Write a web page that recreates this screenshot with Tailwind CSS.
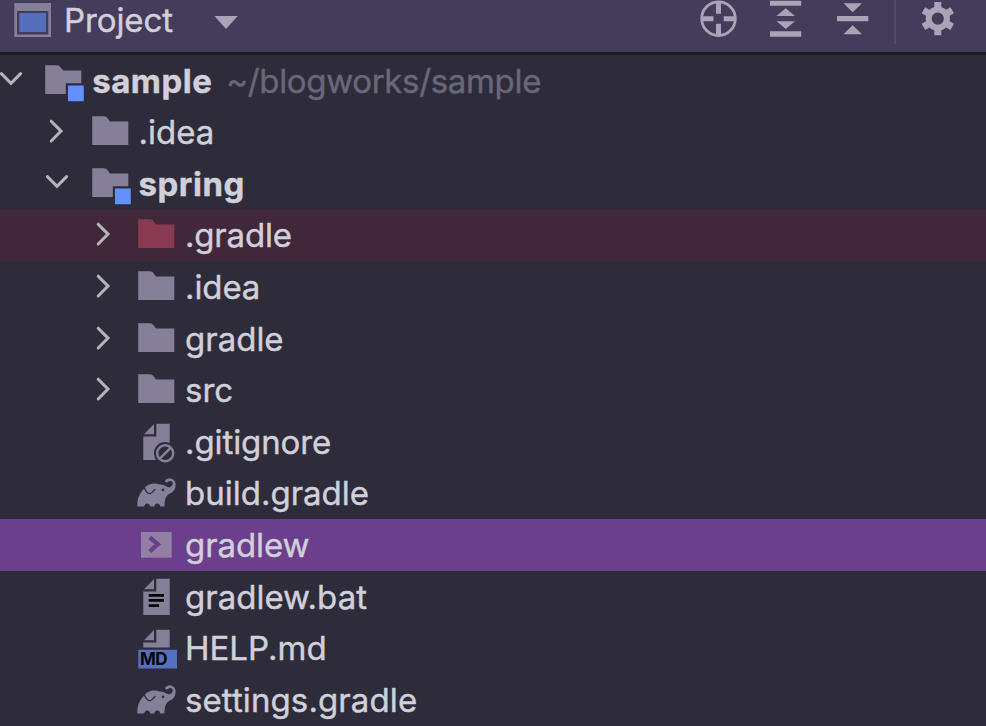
<!DOCTYPE html>
<html lang="en">
<head>
  <meta charset="UTF-8">
  <meta name="viewport" content="width=device-width, initial-scale=1.0">
  <title>Project</title>
  <script src="https://cdn.jsdelivr.net/npm/@tailwindcss/browser@4"></script>
</head>
<body class="bg-[#2e2c3a] text-[#d1d0da] font-['Inter',sans-serif] text-[33px] [-webkit-text-stroke:0.4px] overflow-hidden h-screen">

  <!-- Shared icons -->
  <svg class="hidden">
    <symbol id="right" viewBox="0 0 24 51.6">
      <path d="M5.2 15.2L15 25.1L5.2 35" fill="none" stroke="#b5b4b8" stroke-width="3" stroke-linecap="round"/>
    </symbol>
    <symbol id="down" viewBox="0 0 24 51.6">
      <path d="M1.4 18.6L11 28.4L20.6 18.6" fill="none" stroke="#b5b4b8" stroke-width="3" stroke-linecap="round"/>
    </symbol>
    <symbol id="folder" viewBox="0 0 48 51.6">
      <path d="M2.2 10.3H13.4C16.5 10.3 17.5 12.2 20 15.4H38.3V39H2.2Z" fill="currentColor"/>
    </symbol>
    <symbol id="module" viewBox="0 0 48 51.6">
      <path d="M2.2 10.3H13.4C16.5 10.3 17.5 12.2 20 15.4H38.3V28.3H22.8V39H2.2Z" fill="currentColor"/>
      <path d="M25 30.6H40.8V46.2H25Z" fill="#6490fb"/>
    </symbol>
    <symbol id="elephant" viewBox="0 0 48 51.6">
      <g transform="translate(-16 -52.4) scale(.33333)">
        <path d="M52 276C51 256 56 241 67 228L75 219C78 215 80 213 84 212C94 206 108 205 119 210C129 210 139 216 145 218C152 219 159 213 158 206C157 199 150 197 146 201C143 205 136 204 135 199C137 194 144 191 149 191C160 192 167 200 167 210C167 225 158 235 147 238C140 242 136 249 134 262L133 276H121C119 264 105 264 103 276H91C88 264 76 264 72 276Z" fill="currentColor"/>
        <path d="M73 220C78 231 84 239 91 237C97 235 100 228 106 224" fill="none" stroke="#2e2c3a" stroke-width="4"/>
        <circle cx="129" cy="226" r="4" fill="#2e2c3a"/>
      </g>
    </symbol>
  </svg>

  <!-- Tool window header -->
  <header class="flex h-[52px] bg-[#453b5b]">
    <div class="flex w-[64px] shrink-0">
      <svg class="w-[64px] h-[52px]" viewBox="0 0 64 52">
        <path d="M14.3 3H51V37H14.3ZM17 11V34.5H48.3V11Z" fill="#857f98" fill-rule="evenodd"/>
        <path d="M19.3 13H46V32H19.3Z" fill="#566fbd"/>
      </svg>
    </div>
    <h1 class="w-[150px] h-[40px] leading-[40px] tracking-[-0.1px]">Project</h1>
    <svg class="w-[24px] h-[52px]" viewBox="0 0 24 52"><path d="M.5 16H23.8L12 29Z" fill="#aaa5b6"/></svg>
    <div class="flex ml-auto text-[#aaa5b6]">
      <svg class="w-[306px] h-[52px]" viewBox="0 0 306 52" fill="currentColor">
        <!-- locate -->
        <circle cx="38.5" cy="18.7" r="16.8" fill="none" stroke="currentColor" stroke-width="2.8"/>
        <path d="M36 2H41V13.7H36ZM36 23.8H41V35.5H36ZM22 16.2H33.5V21.2H22ZM43.7 16.2H55V21.2H43.7Z"/>
        <!-- expand all -->
        <path d="M90 .7H121.2V5.8H90ZM90 31.3H121.2V36.7H90ZM96.5 16L105.7 8.3L115 16ZM96.5 21.2H115L105.7 29Z"/>
        <!-- collapse all -->
        <path d="M157 16H188.3V21.3H157ZM163.5 3.2H182L172.7 12.2ZM163.5 34.2L172.7 25.2L182 34.2Z"/>
        <path d="M214.2 0H216V44H214.2Z" fill="#544d66"/>
        <!-- settings -->
        <g fill="none" stroke="currentColor">
          <circle cx="257.8" cy="18.6" r="9.1" stroke-width="6"/>
          <path stroke-width="7" d="M257.8 2V9M257.8 28.2V35.2M243.4 10.3L249.5 13.8M266.1 23.4L272.2 26.9M243.4 26.9L249.5 23.4M266.1 13.8L272.2 10.3"/>
        </g>
      </svg>
    </div>
  </header>
  <div class="h-[2.6px] bg-[#1d1b26]"></div>

  <!-- Project tree -->
  <ul class="text-[#857f98] leading-[51.6px] whitespace-nowrap">
    <li class="flex h-[51.6px]">
      <svg class="w-[24px] h-[51.6px] mr-[19.2px]"><use href="#down"/></svg>
      <svg class="w-[48px] h-[51.6px] mr-px"><use href="#module"/></svg>
      <span class="text-[#d1d0da] font-bold tracking-[0.5px] w-[134px] pt-px">sample</span>
      <span class="text-[#696779] tracking-[-0.33px] pt-px">~/blogworks/sample</span>
    </li>
    <li class="flex h-[51.6px] pl-[46.4px]">
      <svg class="w-[24px] h-[51.6px] mr-[19.2px]"><use href="#right"/></svg>
      <svg class="w-[48px] h-[51.6px] mr-px"><use href="#folder"/></svg>
      <span class="text-[#d1d0da] pt-px">.idea</span>
    </li>
    <li class="flex h-[51.6px] pl-[46.4px]">
      <svg class="w-[24px] h-[51.6px] mr-[19.2px]"><use href="#down"/></svg>
      <svg class="w-[48px] h-[51.6px] mr-px"><use href="#module"/></svg>
      <span class="text-[#d1d0da] font-bold tracking-[0.5px] pt-px">spring</span>
    </li>
    <li class="flex h-[51.6px] pl-[92.8px] bg-[#40273a]">
      <svg class="w-[24px] h-[51.6px] mr-[19.2px]"><use href="#right"/></svg>
      <svg class="w-[48px] h-[51.6px] mr-px text-[#8a3a50]"><use href="#folder"/></svg>
      <span class="text-[#d1d0da] tracking-[-0.2px] pt-px">.gradle</span>
    </li>
    <li class="flex h-[51.6px] pl-[92.8px]">
      <svg class="w-[24px] h-[51.6px] mr-[19.2px]"><use href="#right"/></svg>
      <svg class="w-[48px] h-[51.6px] mr-px"><use href="#folder"/></svg>
      <span class="text-[#d1d0da] tracking-[-0.1px] pt-px">.idea</span>
    </li>
    <li class="flex h-[51.6px] pl-[92.8px]">
      <svg class="w-[24px] h-[51.6px] mr-[19.2px]"><use href="#right"/></svg>
      <svg class="w-[48px] h-[51.6px] mr-px"><use href="#folder"/></svg>
      <span class="text-[#d1d0da] pt-px">gradle</span>
    </li>
    <li class="flex h-[51.6px] pl-[92.8px]">
      <svg class="w-[24px] h-[51.6px] mr-[19.2px]"><use href="#right"/></svg>
      <svg class="w-[48px] h-[51.6px] mr-px"><use href="#folder"/></svg>
      <span class="text-[#d1d0da] pt-px">src</span>
    </li>
    <li class="flex h-[51.6px] pl-[136px]">
      <svg class="w-[48px] h-[51.6px] mr-px" viewBox="0 0 48 51.6" fill="currentColor">
        <path d="M18 8V18.2H8ZM20.3 7.7H33.7V44H7.3V20.5H20.3Z"/>
        <circle cx="29.2" cy="37.2" r="11.2" fill="#2e2c3a"/>
        <g fill="none" stroke="currentColor" stroke-width="2.5">
          <circle cx="29.2" cy="37.2" r="8"/>
          <path d="M23.8 42.6L34.6 31.8"/>
        </g>
      </svg>
      <span class="text-[#d1d0da] tracking-[-0.1px] pt-px">.gitignore</span>
    </li>
    <li class="flex h-[51.6px] pl-[136px]">
      <svg class="w-[48px] h-[51.6px] mr-px"><use href="#elephant"/></svg>
      <span class="text-[#d1d0da] pt-px">build.gradle</span>
    </li>
    <li class="flex h-[51.6px] pl-[136px] bg-[#6b3f8b]">
      <svg class="w-[48px] h-[51.6px] mr-px" viewBox="0 0 48 51.6">
        <path d="M5 13H35.7V38.7H5Z" fill="#917fa5"/>
        <path d="M13.8 18.3L21.8 25.3L13.8 32.3" fill="none" stroke="#6b3f8b" stroke-width="4.3"/>
      </svg>
      <span class="text-[#d1d0da] tracking-[-0.1px] pt-px">gradlew</span>
    </li>
    <li class="flex h-[51.6px] pl-[136px]">
      <svg class="w-[48px] h-[51.6px] mr-px" viewBox="0 0 48 51.6" fill="currentColor">
        <path d="M18 8V18.2H8ZM20.3 7.7H33.7V44H7.3V20.5H20.3Z"/>
        <path d="M12.7 24.4H28M12.7 29.4H28M12.7 34.6H23" stroke="#050508" stroke-width="2.6"/>
      </svg>
      <span class="text-[#d1d0da] pt-px">gradlew.bat</span>
    </li>
    <li class="flex h-[51.6px] pl-[136px]">
      <svg class="w-[48px] h-[51.6px] mr-px" viewBox="0 0 48 51.6" fill="currentColor">
        <path d="M18 8V18.2H8ZM20.3 7.7H33.7V25.5H7.3V20.5H20.3Z"/>
        <path d="M2.3 27.8H41V46.5H2.3Z" fill="#5470bf"/>
        <text x="4" y="43.4" font-size="17" font-weight="700" textLength="27.5" fill="#050508">MD</text>
      </svg>
      <span class="text-[#d1d0da] pt-px">HELP.md</span>
    </li>
    <li class="flex h-[51.6px] pl-[136px]">
      <svg class="w-[48px] h-[51.6px] mr-px"><use href="#elephant"/></svg>
      <span class="text-[#d1d0da] tracking-[0.1px] pt-px">settings.gradle</span>
    </li>
  </ul>
</body>
</html>
